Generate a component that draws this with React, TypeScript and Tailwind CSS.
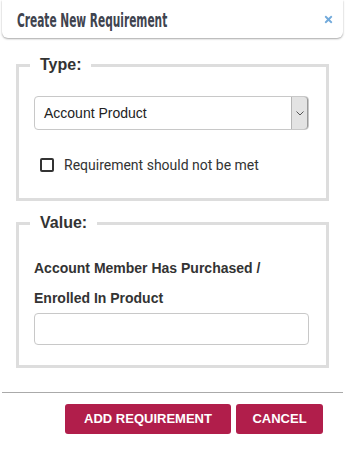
import { FaTimes } from 'react-icons/fa';

const ARIAL = { fontFamily: '"Liberation Sans", Arial, sans-serif' };

function Legend({ children }: { children: string }) {
  return (
    <legend
      className="ml-[-4px] px-[10px] text-[16px] font-bold leading-[20px] text-[#333]"
      style={ARIAL}
    >
      {children}
    </legend>
  );
}

export default function App() {
  return (
    <div className="h-[452px] w-[345px] overflow-hidden bg-white">
      <div className="mx-[2px] flex h-[38px] items-center justify-between rounded-b-[6px] bg-white pl-[15px] pr-[9px] shadow-[0_1px_2px_rgba(0,0,0,0.35)]">
        <h1
          className="mt-[2px] origin-left scale-x-[0.62] whitespace-nowrap text-[19px] font-bold leading-none text-[#40444f]"
          style={{ fontFamily: '"DejaVu Sans", sans-serif', fontStretch: 'condensed' }}
        >
          Create New Requirement
        </h1>
        <FaTimes className="h-[11px] w-[11px] text-[#72aadb]" />
      </div>

      <div className="px-[16px] pt-[17px]">
        <fieldset className="w-[313px] border-[3px] border-[#dddddd] pb-[26px] pl-[15px] pr-[17px] pt-[21px]">
          <Legend>Type:</Legend>
          <div className="flex h-[34px] w-[275px] rounded-[4px] border border-[#c8c8c8] bg-white">
            <div className="flex flex-1 items-center pl-[9px] text-[14px] text-[#222]" style={ARIAL}>
              Account Product
            </div>
            <div className="flex w-[17px] items-center justify-center rounded-r-[3px] border-l border-[#b5b5b5] bg-[#e3e3e3] shadow-[inset_-1px_0_0_#9a9a9a]">
              <svg width="8" height="5" viewBox="0 0 8 5">
                <path d="M0.5 0.5 L4 4 L7.5 0.5" fill="none" stroke="#555" strokeWidth="1" />
              </svg>
            </div>
          </div>
          <label className="mt-[28px] ml-[6px] flex items-center gap-[10px]">
            <span className="h-[14px] w-[14px] rounded-[2px] border-2 border-[#333]" />
            <span
              className="text-[14px] leading-[14px] text-[#333]"
              style={{ fontFamily: 'Roboto, sans-serif' }}
            >
              Requirement should not be met
            </span>
          </label>
        </fieldset>

        <fieldset className="mt-[12px] w-[313px] border-[3px] border-[#dddddd] pb-[20px] pl-[15px] pr-[17px] pt-[20px]">
          <Legend>Value:</Legend>
          <div className="text-[14px] font-bold leading-[30px] text-[#333]" style={ARIAL}>
            <div>Account Member Has Purchased /</div>
            <div>Enrolled In Product</div>
          </div>
          <input
            type="text"
            className="block h-[32px] w-[275px] rounded-[4px] border border-[#c8c8c8] bg-white px-[8px] outline-none"
          />
        </fieldset>
      </div>

      <div className="mx-[2px] mt-[24px] border-t border-[#aaaaaa]" />

      <div className="flex justify-end gap-[5px] pr-[22px] pt-[11px]" style={ARIAL}>
        <button className="h-[30px] w-[166px] rounded-[3px] bg-[#b11e4b] text-[13px] font-bold text-white">
          ADD REQUIREMENT
        </button>
        <button className="h-[30px] w-[87px] rounded-[3px] bg-[#b11e4b] text-[13px] font-bold text-white">
          CANCEL
        </button>
      </div>
    </div>
  );
}
